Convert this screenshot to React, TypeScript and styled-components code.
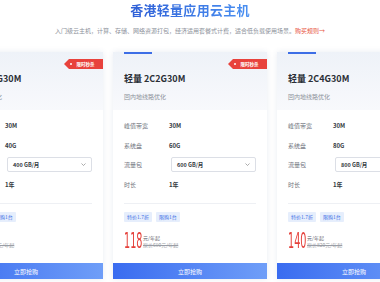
import styled, { createGlobalStyle } from "styled-components";

const GlobalStyle = createGlobalStyle`
  html, body {
    margin: 0;
    padding: 0;
    background: #ffffff;
  }
  body {
    font-family: "Noto Sans CJK SC", "Noto Sans", sans-serif;
    color: #333;
  }
`;

const Page = styled.div`
  width: 380px;
  height: 282px;
  overflow: hidden;
  background: #ffffff;
  display: flex;
  flex-direction: column;
  align-items: center;
`;

const Title = styled.h1`
  margin: 2px 0 0;
  font-size: 13px;
  line-height: 16px;
  font-weight: 700;
  letter-spacing: 0.3px;
  background: linear-gradient(90deg, #2e5fd6, #4a90f2);
  -webkit-background-clip: text;
  background-clip: text;
  color: transparent;
`;

const Intro = styled.p`
  margin: 9px 0 0;
  font-size: 6px;
  line-height: 8px;
  color: #8c919a;
  white-space: nowrap;
`;

const RuleLink = styled.span`
  color: #e8553f;
`;

const Cards = styled.div`
  align-self: flex-start;
  margin: 17px 0 0 -51px;
  display: flex;
  gap: 10px;
`;

const Card = styled.div`
  position: relative;
  width: 154px;
  flex: none;
  background: #ffffff;
  box-shadow: 0 0 6px rgba(40, 70, 130, 0.1);
  display: flex;
  flex-direction: column;
`;

const Header = styled.div`
  height: 58px;
  box-sizing: border-box;
  background: linear-gradient(180deg, #eef2f8 0%, #f8f9fc 100%);
  padding: 0 11px 9px;
  display: flex;
  flex-direction: column;
`;

const TopBar = styled.div<{ $show: boolean }>`
  width: 28px;
  height: 2px;
  background: ${(p) => (p.$show ? "#3d6ee6" : "transparent")};
`;

const Badge = styled.div`
  position: absolute;
  top: 7px;
  right: 0;
  width: 39px;
  height: 10px;
  background: #e8423c;
  clip-path: polygon(5px 0, 100% 0, 100% 100%, 5px 100%, 0 50%);
  color: #fff;
  font-size: 4.5px;
  line-height: 10px;
  font-weight: 700;
  text-align: center;
  padding-left: 4px;
  box-sizing: border-box;

  &::before {
    content: "";
    position: absolute;
    left: 6px;
    top: 4px;
    width: 2px;
    height: 2px;
    border-radius: 50%;
    background: #fff;
  }
`;

const PlanName = styled.div`
  margin-top: 19px;
  font-size: 9px;
  line-height: 12px;
  font-weight: 700;
  color: #2b2f36;
  white-space: nowrap;
`;

const PlanNote = styled.div`
  margin-top: 8px;
  font-size: 6px;
  line-height: 8px;
  color: #8c919a;
  white-space: nowrap;
`;

const Body = styled.div`
  padding: 6px 11px 0;
  display: flex;
  flex-direction: column;
`;

const Row = styled.div`
  height: 19.5px;
  display: flex;
  align-items: center;
`;

const Label = styled.span`
  width: 45px;
  flex: none;
  font-size: 6px;
  color: #6f747d;
`;

const Value = styled.span`
  font-size: 6px;
  font-weight: 700;
  color: #333840;
`;

const Select = styled.div`
  margin-left: 2px;
  width: 85px;
  height: 15px;
  box-sizing: border-box;
  border: 1px solid #dcdfe6;
  border-radius: 2px;
  background: #fff;
  padding: 0 5px;
  display: flex;
  align-items: center;
  justify-content: space-between;
  font-size: 5.5px;
  font-weight: 700;
  color: #333840;
`;

const Divider = styled.div`
  margin-top: 9px;
  height: 1px;
  background: #eef0f4;
`;

const Tags = styled.div`
  margin-top: 8px;
  display: flex;
  gap: 4px;
`;

const Tag = styled.span`
  height: 10px;
  padding: 0 3px;
  background: #e6eefc;
  color: #3d6ee6;
  font-size: 5px;
  line-height: 10px;
  border-radius: 1px;
`;

const PriceRow = styled.div`
  margin-top: 9px;
  height: 20px;
  display: flex;
  align-items: center;
`;

const Price = styled.span`
  display: inline-block;
  width: 17px;
  font-family: "DejaVu Sans", sans-serif;
  font-size: 21px;
  line-height: 20px;
  color: #e5403a;
  transform: scaleX(0.46);
  transform-origin: left center;
  white-space: nowrap;
`;

const PriceInfo = styled.div`
  margin-left: 2px;
  display: flex;
  flex-direction: column;
  font-size: 5px;
  line-height: 7px;
  color: #5f646c;
  white-space: nowrap;
`;

const OldPrice = styled.span`
  color: #9a9ea6;
  text-decoration: line-through;
`;

const BuyButton = styled.button`
  margin-top: 12px;
  height: 16px;
  border: none;
  background: linear-gradient(90deg, #3a6cf0 0%, #6f9ef8 100%);
  color: #fff;
  font-family: inherit;
  font-size: 6px;
  padding: 0;
`;

const Chevron = () => (
  <svg width="5" height="3" viewBox="0 0 5 3">
    <path d="M0.5 0.5 L2.5 2.5 L4.5 0.5" fill="none" stroke="#888" strokeWidth="0.7" />
  </svg>
);

const plans = [
  { name: "轻量 2C1G30M", disk: "40G", traffic: "400 GB/月", price: "88", old: "原价450元/年起", tags: ["特价1.9折", "限购1台"], bar: false },
  { name: "轻量 2C2G30M", disk: "60G", traffic: "600 GB/月", price: "118", old: "原价690元/年起", tags: ["特价1.7折", "限购1台"], bar: true },
  { name: "轻量 2C4G30M", disk: "80G", traffic: "800 GB/月", price: "140", old: "原价820元/年起", tags: ["特价1.7折", "限购1台"], bar: true },
];

export default function App() {
  return (
    <Page>
      <GlobalStyle />
      <Title>香港轻量应用云主机</Title>
      <Intro>
        入门级云主机，计算、存储、网络资源打包，经济适用套餐式计费，适合低负载使用场景。
        <RuleLink>购买规则→</RuleLink>
      </Intro>
      <Cards>
        {plans.map((p) => (
          <Card key={p.name}>
            <Header>
              <TopBar $show={p.bar} />
              <PlanName>{p.name}</PlanName>
              <PlanNote>回内地线路优化</PlanNote>
            </Header>
            <Badge>限时秒杀</Badge>
            <Body>
              <Row>
                <Label>峰值带宽</Label>
                <Value>30M</Value>
              </Row>
              <Row>
                <Label>系统盘</Label>
                <Value>{p.disk}</Value>
              </Row>
              <Row>
                <Label>流量包</Label>
                <Select>
                  {p.traffic}
                  <Chevron />
                </Select>
              </Row>
              <Row>
                <Label>时长</Label>
                <Value>1年</Value>
              </Row>
              <Divider />
              <Tags>
                {p.tags.map((t) => (
                  <Tag key={t}>{t}</Tag>
                ))}
              </Tags>
              <PriceRow>
                <Price>{p.price}</Price>
                <PriceInfo>
                  <span>元/年起</span>
                  <OldPrice>{p.old}</OldPrice>
                </PriceInfo>
              </PriceRow>
            </Body>
            <BuyButton>立即抢购</BuyButton>
          </Card>
        ))}
      </Cards>
    </Page>
  );
}
